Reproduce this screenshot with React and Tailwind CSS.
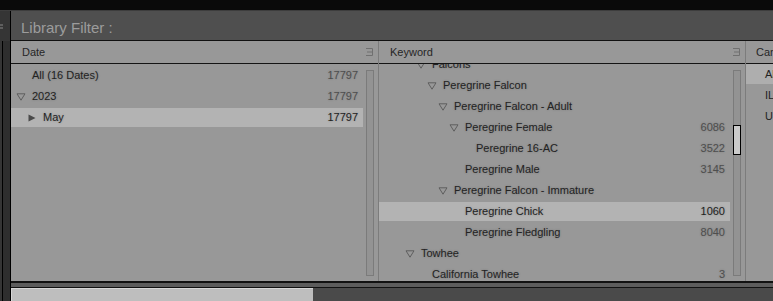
const dates = [
  { label: "All (16 Dates)", count: "17797", level: 0 },
  { label: "2023", count: "17797", level: 0, open: true },
  { label: "May", count: "17797", level: 1, closed: true, selected: true },
];

const keywords = [
  { label: "Falcons", level: 1, open: true },
  { label: "Peregrine Falcon", level: 2, open: true },
  { label: "Peregrine Falcon - Adult", level: 3, open: true },
  { label: "Peregrine Female", count: "6086", level: 4, open: true },
  { label: "Peregrine 16-AC", count: "3522", level: 5 },
  { label: "Peregrine Male", count: "3145", level: 4 },
  { label: "Peregrine Falcon - Immature", level: 3, open: true },
  { label: "Peregrine Chick", count: "1060", level: 4, selected: true },
  { label: "Peregrine Fledgling", count: "8040", level: 4 },
  { label: "Towhee", level: 0, open: true },
  { label: "California Towhee", count: "3", level: 1 },
];

const cameras = [
  { label: "All", selected: true },
  { label: "ILCE-1" },
  { label: "Unknown" },
];

const OpenArrow = () => (
  <svg width="10" height="8" viewBox="0 0 10 8" className="shrink-0">
    <polygon
      points="1,0.8 9,0.8 5,7.2"
      fill="none"
      stroke="#5e5e5e"
      strokeWidth="1"
      strokeLinejoin="round"
    />
  </svg>
);

const ClosedArrow = () => (
  <svg width="8" height="8" viewBox="0 0 8 8" className="shrink-0">
    <polygon points="0.5,0.5 7.5,4 0.5,7.5" fill="#4a4a4a" />
  </svg>
);

const MenuIcon = () => (
  <svg width="7" height="8" viewBox="0 0 7 8">
    <path d="M0 0.5H6.5M1 4H6.5M0 7.5H6.5M6.5 0.5V7.5" stroke="#707070" strokeWidth="1" fill="none" />
  </svg>
);

const GripIcon = () => (
  <svg width="4" height="5" viewBox="0 0 4 5">
    <path d="M0 1H3M0 4H3" stroke="#8a8a8a" strokeWidth="1" />
  </svg>
);

const Row = ({ item, base }) => {
  const text = base + item.level * 11;
  return (
    <div className="h-[21px]">
      <div
        className={`h-[19px] flex items-center pr-[5px] ${
          item.selected ? "bg-[#b3b3b3]" : ""
        }`}
      >
        <div className="relative flex-1 h-full flex items-center" style={{ paddingLeft: text }}>
          {(item.open || item.closed) && (
            <span
              className="absolute top-[6px]"
              style={{ left: text - (item.closed ? 15 : 16) }}
            >
              {item.open ? <OpenArrow /> : <ClosedArrow />}
            </span>
          )}
          <span className="text-[#232323] [text-shadow:0_0_2px_rgba(60,60,60,0.35)]">{item.label}</span>
        </div>
        {item.count && (
          <span
            className={`${
              item.selected ? "text-[#1e1e1e]" : "text-[#4e4e4e]"
            } [text-shadow:0_0_2px_rgba(60,60,60,0.3)]`}
          >
            {item.count}
          </span>
        )}
      </div>
    </div>
  );
};

const Scrollbar = ({ thumb }) => (
  <div className="w-[8px] shrink-0 ml-[3px] mr-[4px] mt-[6px] mb-[5px] border border-[#7b7b7b] bg-[#939393] flex flex-col">
    {thumb && (
      <div className="mt-[54px] mx-[-1px] h-[30px] border border-black bg-[#cbcbcb]" />
    )}
  </div>
);

const Column = ({ title, items, base, offset, thumb, width }) => (
  <div className="flex flex-col shrink-0 border-r border-[#7c7c7c]" style={{ width }}>
    <div className="h-[23px] shrink-0 flex items-center justify-between pl-[11px] pr-[5px] border-b border-[#141414]">
      <span className="text-[#262626]">{title}</span>
      <MenuIcon />
    </div>
    <div className="flex-1 flex min-h-0">
      <div className="flex-1 overflow-hidden">
        <div style={{ marginTop: offset }}>
          {items.map((it) => (
            <Row key={it.label} item={it} base={base} />
          ))}
        </div>
      </div>
      <Scrollbar thumb={thumb} />
    </div>
  </div>
);

export default function App() {
  return (
    <div className="w-[773px] h-[301px] bg-[#0a0a0a] overflow-hidden flex flex-col font-['Liberation_Sans',Arial,sans-serif] text-[11px]">
      <div className="h-[10px] shrink-0" />
      <div className="h-px shrink-0 bg-[#3d3d3d]" />
      <div className="flex-1 flex min-h-0">
        {/* left panel edge */}
        <div className="w-[11px] shrink-0 flex flex-col border-r border-black">
          <div className="h-[30px] bg-[#353535] flex items-center">
            <GripIcon />
          </div>
          <div className="flex-1 flex">
            <div className="w-[3px] bg-[#353535] border-r border-black" />
            <div className="flex-1 bg-[#2e2e2e]" />
          </div>
        </div>

        <div className="flex-1 flex flex-col min-w-0">
          {/* filter title */}
          <div className="h-[30px] shrink-0 bg-[#4f4f4f] border-b border-[#111] flex items-center pl-[10px]">
            <span className="text-[15px] text-[#9c9c9c] leading-none pt-[3px]">Library Filter :</span>
          </div>

          {/* columns */}
          <div className="h-[242px] shrink-0 flex bg-[#989898] border-b-2 border-[#111]">
            <Column title="Date" items={dates} base={21} offset={2} width={368} />
            <Column title="Keyword" items={keywords} base={42} offset={-9} thumb width={367} />
            <div className="flex-1 min-w-0 overflow-hidden flex flex-col">
              <div className="h-[23px] shrink-0 flex items-center pl-[10px] border-b border-[#141414] whitespace-nowrap">
                <span className="text-[#262626]">Camera</span>
              </div>
              <div>
                {cameras.map((c) => (
                  <div key={c.label} className="h-[21px]">
                    <div
                      className={`h-[20px] flex items-center pl-[19px] whitespace-nowrap text-[#232323] ${
                        c.selected ? "bg-[#aeaeae]" : ""
                      }`}
                    >
                      {c.label}
                    </div>
                  </div>
                ))}
              </div>
            </div>
          </div>

          {/* bottom */}
          <div className="h-[5px] shrink-0 bg-[#5c5c5c] border-b border-[#111]" />
          <div className="flex-1 flex bg-[#4a4a4a]">
            <div className="w-[302px] bg-[#bebebe] border-t border-l border-[#d6d6d6]" />
          </div>
        </div>
      </div>
    </div>
  );
}
